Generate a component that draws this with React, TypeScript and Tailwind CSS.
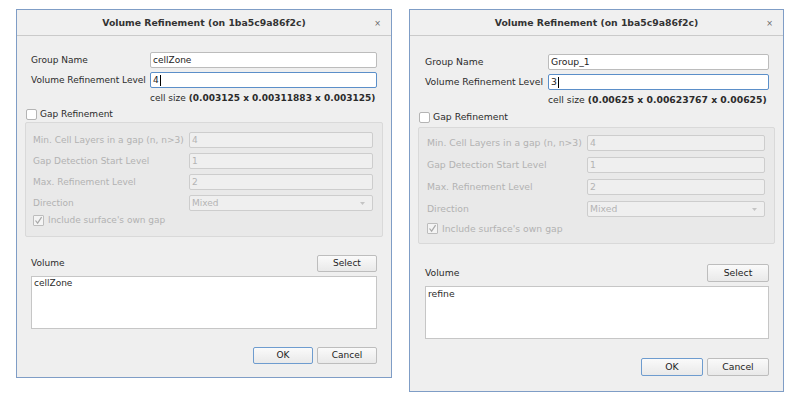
import React from "react";

type Spec = {
  width: string;
  text: string;
  title: string;
  bodyPad: string;
  labelCol: string;
  innerLabelCol: string;
  rowGap: string;
  cellSize: string;
  gapRow: string;
  group: string;
  groupInner: string;
  groupGap: string;
  volumeRow: string;
  textArea: string;
  buttonRow: string;
  btn: string;
  btnW: string;
};

const leftSpec: Spec = {
  width: "w-[376px]",
  text: "text-[9px]",
  title: "text-[9.3px]",
  bodyPad: "pt-[16px] pb-[13px] px-[14px]",
  labelCol: "w-[119px]",
  innerLabelCol: "w-[156px]",
  rowGap: "gap-[4px]",
  cellSize: "mt-[4px] h-[12px]",
  gapRow: "mt-[3px] h-[14px] -ml-[5px]",
  group: "mt-[1px] h-[115px] -mx-[6px] pt-[9px] pb-[11px] pl-[7px] pr-[9px]",
  groupInner: "gap-[5px]",
  groupGap: "mt-[4px]",
  volumeRow: "mt-[18px] h-[17px]",
  textArea: "mt-[4px] h-[53px]",
  buttonRow: "mt-[18px] h-[17px]",
  btn: "h-[17px]",
  btnW: "w-[60px]",
};

const rightSpec: Spec = {
  width: "w-[375px]",
  text: "text-[9.25px]",
  title: "text-[9.3px]",
  bodyPad: "pt-[18px] pb-[15px] pl-[15px] pr-[14px]",
  labelCol: "w-[123px]",
  innerLabelCol: "w-[160px]",
  rowGap: "gap-[4px]",
  cellSize: "mt-[4px] h-[12px]",
  gapRow: "mt-[4px] h-[14px] -ml-[6px]",
  group: "mt-[3px] h-[117px] -ml-[7px] -mr-[6px] pt-[7px] pb-[10px] pl-[8px] pr-[9px]",
  groupInner: "gap-[6px]",
  groupGap: "mt-[6px]",
  volumeRow: "mt-[20px] h-[17px]",
  textArea: "mt-[5px] h-[53px]",
  buttonRow: "mt-[19px] h-[18px]",
  btn: "h-[18px]",
  btnW: "w-[62px]",
};

function Field({ value, focused }: { value: string; focused?: boolean }) {
  return (
    <div
      className={
        focused
          ? "flex h-[16px] flex-1 items-center rounded-[2px] border border-[#5b8fc9] bg-white px-[2px] text-[#222]"
          : "flex h-[16px] flex-1 items-center rounded-[2px] border border-[#bcbcbc] bg-white px-[2px] text-[#222]"
      }
    >
      <span>{value}</span>
      {focused && <span className="ml-px h-[11px] w-px bg-black" />}
    </div>
  );
}

function DisabledField({ value, combo }: { value: string; combo?: boolean }) {
  return (
    <div className="flex h-[16px] flex-1 items-center justify-between rounded-[2px] border border-[#cdcdcd] bg-[#efefef] px-[2px] text-[#b4b4b4]">
      <span>{value}</span>
      {combo && (
        <svg width="5" height="3" viewBox="0 0 5 3" className="mr-[5px]">
          <path d="M0 0 L5 0 L2.5 3 Z" fill="#c4c4c4" />
        </svg>
      )}
    </div>
  );
}

function Button({ label, spec, primary }: { label: string; spec: Spec; primary?: boolean }) {
  return (
    <div
      className={`flex items-center justify-center rounded-[2px] border bg-gradient-to-b from-[#fafafa] to-[#e9e9e9] text-[#222] ${spec.btn} ${spec.btnW} ${
        primary ? "border-[#6e9ccf]" : "border-[#bdbdbd]"
      }`}
    >
      {label}
    </div>
  );
}

function Dialog({
  spec,
  name,
  level,
  cellSize,
  volume,
}: {
  spec: Spec;
  name: string;
  level: string;
  cellSize: string;
  volume: string;
}) {
  return (
    <div className={`flex flex-col border border-[#7f9dc6] bg-[#efefef] ${spec.width} ${spec.text}`}>
      <div className="relative flex h-[26px] items-center justify-center border-b border-[#cacaca] bg-[#f0f0f0]">
        <span className={`font-bold text-[#333] ${spec.title}`}>Volume Refinement (on 1ba5c9a86f2c)</span>
        <span className="absolute inset-y-0 right-[10px] flex items-center pt-[2px] text-[8px] text-[#666]">×</span>
      </div>

      <div className={`flex flex-col ${spec.bodyPad}`}>
        <div className={`flex flex-col ${spec.rowGap}`}>
          <div className="flex items-center">
            <span className={`shrink-0 ${spec.labelCol}`}>Group Name</span>
            <Field value={name} />
          </div>
          <div className="flex items-center">
            <span className={`shrink-0 ${spec.labelCol}`}>Volume Refinement Level</span>
            <Field value={level} focused />
          </div>
        </div>

        <div className={`flex items-center ${spec.cellSize}`}>
          <span className={`shrink-0 ${spec.labelCol}`} />
          <span className="whitespace-nowrap">
            cell size <span className="font-bold">{cellSize}</span>
          </span>
        </div>

        <div className={`flex items-center gap-[3px] ${spec.gapRow}`}>
          <span className="h-[11px] w-[11px] rounded-[2px] border border-[#b4b4b4] bg-white" />
          <span>Gap Refinement</span>
        </div>

        <div
          className={`flex flex-col rounded-[2px] border border-[#d9d9d9] bg-[#e9e9e9] text-[#b2b2b2] ${spec.group}`}
        >
          <div className={`flex flex-col ${spec.groupInner}`}>
            <div className="flex items-center">
              <span className={`shrink-0 whitespace-nowrap ${spec.innerLabelCol}`}>
                Min. Cell Layers in a gap (n, n&gt;3)
              </span>
              <DisabledField value="4" />
            </div>
            <div className="flex items-center">
              <span className={`shrink-0 ${spec.innerLabelCol}`}>Gap Detection Start Level</span>
              <DisabledField value="1" />
            </div>
            <div className="flex items-center">
              <span className={`shrink-0 ${spec.innerLabelCol}`}>Max. Refinement Level</span>
              <DisabledField value="2" />
            </div>
            <div className="flex items-center">
              <span className={`shrink-0 ${spec.innerLabelCol}`}>Direction</span>
              <DisabledField value="Mixed" combo />
            </div>
          </div>
          <div className={`flex h-[12px] items-center gap-[4px] ${spec.groupGap}`}>
            <span className="flex h-[11px] w-[11px] items-center justify-center rounded-[1px] border border-[#bdbdbd] bg-[#f4f4f4]">
              <svg width="9" height="9" viewBox="0 0 9 9">
                <path d="M1.5 4.5 L3.6 7.2 L7.6 1.2" fill="none" stroke="#a9a9a9" strokeWidth="1.2" />
              </svg>
            </span>
            <span>Include surface's own gap</span>
          </div>
        </div>

        <div className={`flex items-center justify-between ${spec.volumeRow}`}>
          <span>Volume</span>
          <Button label="Select" spec={spec} />
        </div>

        <div className={`border border-[#c6c6c6] bg-white px-[2px] pt-[2px] ${spec.textArea}`}>{volume}</div>

        <div className={`flex items-center justify-end gap-[4px] ${spec.buttonRow}`}>
          <Button label="OK" spec={spec} primary />
          <Button label="Cancel" spec={spec} />
        </div>
      </div>
    </div>
  );
}

export default function App() {
  return (
    <div className="flex h-[402px] w-[797px] items-start gap-[17px] bg-white pl-[16px] pt-[9px] font-['DejaVu_Sans',sans-serif] leading-none text-[#2b2b2b]">
      <Dialog
        spec={leftSpec}
        name="cellZone"
        level="4"
        cellSize="(0.003125 x 0.00311883 x 0.003125)"
        volume="cellZone"
      />
      <Dialog
        spec={rightSpec}
        name="Group_1"
        level="3"
        cellSize="(0.00625 x 0.00623767 x 0.00625)"
        volume="refine"
      />
    </div>
  );
}
